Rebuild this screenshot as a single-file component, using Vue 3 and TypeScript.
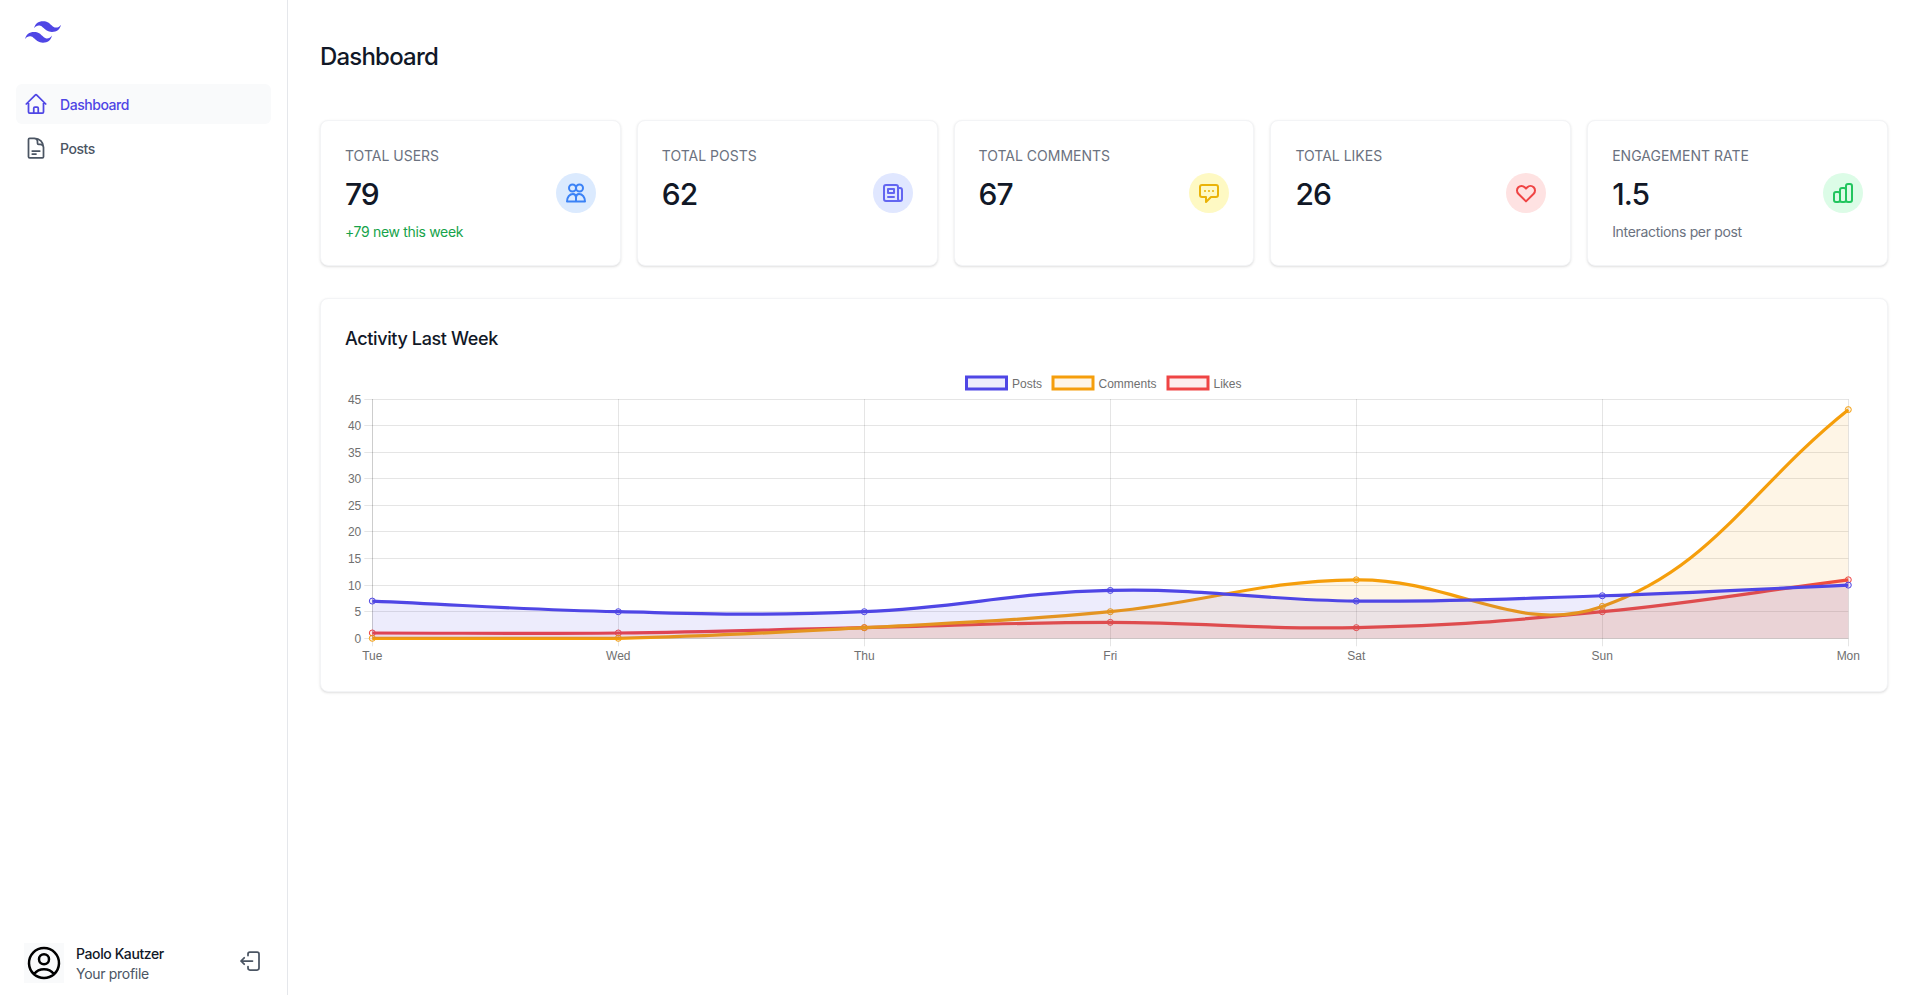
<script setup lang="ts">
type Point = { x: number; y: number }

const stats = [
  { label: 'Total Users', value: '79', sub: '+79 new this week', subClass: 'sub-green', tone: 'blue', icon: 'users' },
  { label: 'Total Posts', value: '62', sub: '', subClass: '', tone: 'indigo', icon: 'news' },
  { label: 'Total Comments', value: '67', sub: '', subClass: '', tone: 'yellow', icon: 'chat' },
  { label: 'Total Likes', value: '26', sub: '', subClass: '', tone: 'red', icon: 'heart' },
  { label: 'Engagement Rate', value: '1.5', sub: 'Interactions per post', subClass: 'sub-gray', tone: 'green', icon: 'bars' },
]

const days = ['Tue', 'Wed', 'Thu', 'Fri', 'Sat', 'Sun', 'Mon']
const yTicks = [0, 5, 10, 15, 20, 25, 30, 35, 40, 45]

// plot area inside the 1518x300 chart
const left = 27.3
const right = 1503.3
const top = 32
const bottom = 271.3

const xAt = (i: number) => left + ((right - left) / 6) * i
const yAt = (v: number) => bottom - ((bottom - top) / 45) * v

const clamp = (v: number, lo: number, hi: number) => Math.min(hi, Math.max(lo, v))

// same control points as a line chart with tension 0.4
function smooth(values: number[]) {
  const pts: Point[] = values.map((v, i) => ({ x: xAt(i), y: yAt(v) }))
  const t = 0.4
  const ctrl = pts.map((p, i) => {
    const a = pts[i - 1] ?? p
    const b = pts[i + 1] ?? p
    const d01 = Math.hypot(p.x - a.x, p.y - a.y)
    const d12 = Math.hypot(b.x - p.x, b.y - p.y)
    const sum = d01 + d12 || 1
    const fa = (t * d01) / sum
    const fb = (t * d12) / sum
    return {
      px: clamp(p.x - fa * (b.x - a.x), left, right),
      py: clamp(p.y - fa * (b.y - a.y), top, bottom),
      nx: clamp(p.x + fb * (b.x - a.x), left, right),
      ny: clamp(p.y + fb * (b.y - a.y), top, bottom),
    }
  })
  let d = `M${pts[0].x} ${pts[0].y}`
  for (let i = 1; i < pts.length; i++) {
    d += ` C${ctrl[i - 1].nx} ${ctrl[i - 1].ny} ${ctrl[i].px} ${ctrl[i].py} ${pts[i].x} ${pts[i].y}`
  }
  return { pts, line: d, area: `${d} L${right} ${bottom} L${left} ${bottom} Z` }
}

// the last series goes first so that Posts ends up on top
const series = [
  { name: 'Likes', color: '#ef4444', fill: 'rgba(239,68,68,.1)', ...smooth([1, 1, 2, 3, 2, 5, 11]) },
  { name: 'Comments', color: '#f59e0b', fill: 'rgba(245,158,11,.1)', ...smooth([0, 0, 2, 5, 11, 6, 43]) },
  { name: 'Posts', color: '#4f46e5', fill: 'rgba(79,70,229,.1)', ...smooth([7, 5, 5, 9, 7, 8, 10]) },
]

const legend = [
  { name: 'Posts', color: '#4f46e5', fill: 'rgba(79,70,229,.1)', x: 621.5 },
  { name: 'Comments', color: '#f59e0b', fill: 'rgba(245,158,11,.1)', x: 708 },
  { name: 'Likes', color: '#ef4444', fill: 'rgba(239,68,68,.1)', x: 823 },
]

const crisp = (v: number) => Math.round(v - 0.5) + 0.5
</script>

<template>
  <div class="shell">
    <aside class="sidebar">
      <svg class="logo" viewBox="0 0 48 29" fill="#4f46e5">
        <path d="M24 0c-6.4 0-10.4 3.2-12 9.6 2.4-3.2 5.2-4.4 8.4-3.6 1.827.456 3.133 1.781 4.578 3.247C27.333 11.624 30.073 14.4 36 14.4c6.4 0 10.4-3.2 12-9.6-2.4 3.2-5.2 4.4-8.4 3.6-1.827-.456-3.133-1.781-4.578-3.247C32.667 2.776 29.927 0 24 0zM12 14.4c-6.4 0-10.4 3.2-12 9.6 2.4-3.2 5.2-4.4 8.4-3.6 1.827.456 3.133 1.781 4.578 3.247 2.355 2.377 5.095 5.153 11.022 5.153 6.4 0 10.4-3.2 12-9.6-2.4 3.2-5.2 4.4-8.4 3.6-1.827-.456-3.133-1.781-4.578-3.247C20.667 17.176 17.927 14.4 12 14.4z" />
      </svg>

      <nav class="nav">
        <a class="nav-item active">
          <svg class="icon" viewBox="0 0 24 24" fill="none" stroke="currentColor" stroke-width="1.75" stroke-linecap="round" stroke-linejoin="round">
            <path d="m2.25 12 8.954-8.955c.44-.439 1.152-.439 1.591 0L21.75 12M4.5 9.75v10.125c0 .621.504 1.125 1.125 1.125H9.75v-4.875c0-.621.504-1.125 1.125-1.125h2.25c.621 0 1.125.504 1.125 1.125V21h4.125c.621 0 1.125-.504 1.125-1.125V9.75M8.25 21h8.25" />
          </svg>
          <span class="nav-text">Dashboard</span>
        </a>
        <a class="nav-item">
          <svg class="icon" viewBox="0 0 24 24" fill="none" stroke="currentColor" stroke-width="1.75" stroke-linecap="round" stroke-linejoin="round">
            <path d="M19.5 14.25v-2.625a3.375 3.375 0 0 0-3.375-3.375h-1.5A1.125 1.125 0 0 1 13.5 7.125v-1.5a3.375 3.375 0 0 0-3.375-3.375H8.25m0 12.75h7.5m-7.5 3H12M10.5 2.25H5.625c-.621 0-1.125.504-1.125 1.125v17.25c0 .621.504 1.125 1.125 1.125h12.75c.621 0 1.125-.504 1.125-1.125V11.25a9 9 0 0 0-9-9Z" />
          </svg>
          <span class="nav-text">Posts</span>
        </a>
      </nav>

      <div class="profile">
        <div class="avatar">
          <svg viewBox="0 0 24 24" fill="none" stroke="#000" stroke-width="1.5" stroke-linecap="round" stroke-linejoin="round">
            <path d="M17.982 18.725A7.488 7.488 0 0 0 12 15.75a7.488 7.488 0 0 0-5.982 2.975m11.963 0a9 9 0 1 0-11.963 0m11.963 0A8.966 8.966 0 0 1 12 21a8.966 8.966 0 0 1-5.982-2.275M15 9.75a3 3 0 1 1-6 0 3 3 0 0 1 6 0Z" />
          </svg>
        </div>
        <div class="who">
          <div class="who-name">Paolo Kautzer</div>
          <div class="who-link">Your profile</div>
        </div>
        <svg class="icon logout" viewBox="0 0 24 24" fill="none" stroke="currentColor" stroke-width="1.75" stroke-linecap="round" stroke-linejoin="round">
          <path d="M10 6.5V4.900C10 3.850 10.850 3 11.900 3h7.200C20.150 3 21 3.850 21 4.900v14.200c0 1.050-.850 1.900-1.900 1.900h-7.200C10.850 21 10 20.150 10 19.100v-1.600M14.500 12H3m0 0 3.200-3.200M3 12l3.200 3.200" />
        </svg>
      </div>
    </aside>

    <main class="main">
      <h1 class="title">Dashboard</h1>

      <section class="stats">
        <article v-for="s in stats" :key="s.label" class="card stat">
          <div class="stat-label">{{ s.label }}</div>
          <div class="stat-row">
            <div class="stat-value">{{ s.value }}</div>
            <div class="badge" :class="s.tone">
              <svg class="icon" viewBox="0 0 24 24" fill="none" stroke="currentColor" stroke-width="2" stroke-linecap="round" stroke-linejoin="round">
                <template v-if="s.icon === 'users'">
                  <circle cx="8.500" cy="7" r="3.500" />
                  <circle cx="15.500" cy="7" r="3.500" />
                  <path d="M3 20.500c0-4.400 2.600-7.500 6-7.500 2 0 3 1.500 3 3.500v4H3ZM12 16.500c0-2 1-3.500 3-3.500 3.400 0 6 3.100 6 7.500h-9" />
                </template>
                <path v-else-if="s.icon === 'news'" d="M19 20H5a2 2 0 01-2-2V6a2 2 0 012-2h10a2 2 0 012 2v1m2 13a2 2 0 01-2-2V7m2 13a2 2 0 002-2V9a2 2 0 00-2-2h-2m-4-3H9M7 16h6M7 8h6v4H7V8z" />
                <path v-else-if="s.icon === 'chat'" d="M8 10h.01M12 10h.01M16 10h.01M9 16H5a2 2 0 01-2-2V6a2 2 0 012-2h14a2 2 0 012 2v8a2 2 0 01-2 2h-5l-5 5v-5z" />
                <path v-else-if="s.icon === 'heart'" d="M4.318 6.318a4.500 4.500 0 000 6.364L12 20.364l7.682-7.682a4.500 4.500 0 00-6.364-6.364L12 7.636l-1.318-1.318a4.500 4.500 0 00-6.364 0z" />
                <path v-else d="M9 19v-6a2 2 0 00-2-2H5a2 2 0 00-2 2v6a2 2 0 002 2h2a2 2 0 002-2zm0 0V9a2 2 0 012-2h2a2 2 0 012 2v10m-6 0a2 2 0 002 2h2a2 2 0 002-2m0 0V5a2 2 0 012-2h2a2 2 0 012 2v14a2 2 0 01-2 2h-2a2 2 0 01-2-2z" />
              </svg>
            </div>
          </div>
          <div class="stat-sub" :class="s.subClass">{{ s.sub }}</div>
        </article>
      </section>

      <section class="card activity">
        <h2 class="activity-title">Activity Last Week</h2>
        <svg class="chart" viewBox="0 0 1518 300" width="1518" height="300">
          <g v-for="l in legend" :key="l.name">
            <rect :x="l.x" y="10" width="40" height="12" :fill="l.fill" :stroke="l.color" stroke-width="3" />
            <text :x="l.x + 45.500" y="20.600" class="tick" text-anchor="start">{{ l.name }}</text>
          </g>

          <g v-for="v in yTicks" :key="v">
            <line :x1="left - 8" :x2="right" :y1="crisp(yAt(v))" :y2="crisp(yAt(v))" class="grid" />
            <text :x="left - 11" :y="yAt(v) + 4.500" class="tick" text-anchor="end">{{ v }}</text>
          </g>
          <g v-for="(d, i) in days" :key="d">
            <line :x1="crisp(xAt(i))" :x2="crisp(xAt(i))" :y1="top" :y2="bottom + 8" class="grid" />
            <text :x="xAt(i)" :y="bottom + 22" class="tick" text-anchor="middle">{{ d }}</text>
          </g>
          <line :x1="crisp(left)" :x2="crisp(left)" :y1="top" :y2="bottom" class="grid" />
          <line :x1="left" :x2="right" :y1="crisp(bottom)" :y2="crisp(bottom)" class="grid" />

          <g v-for="s in series" :key="s.name">
            <path :d="s.area" :fill="s.fill" />
            <path :d="s.line" fill="none" :stroke="s.color" stroke-width="3.200" />
            <circle v-for="(p, i) in s.pts" :key="i" :cx="p.x" :cy="p.y" r="3" :fill="s.fill" :stroke="s.color" stroke-width="1" />
          </g>
        </svg>
      </section>
    </main>
  </div>
</template>

<style>
html, body {
  margin: 0;
  background: #fff;
}
</style>

<style scoped>
.shell {
  display: flex;
  height: 995px;
  font-family: Inter, "Noto Sans", sans-serif;
  color: #111827;
  overflow: hidden;
}

.sidebar {
  width: 287px;
  flex: none;
  display: flex;
  flex-direction: column;
  border-right: 1px solid #e5e7eb;
  box-sizing: content-box;
}

.logo {
  display: block;
  width: 36px;
  height: 22px;
  margin: 21px 0 0 25px;
}

.nav {
  margin-top: 41px;
  padding: 0 16px;
  display: flex;
  flex-direction: column;
  gap: 4px;
}

.nav-item {
  display: flex;
  align-items: center;
  gap: 12px;
  padding: 8px;
  border-radius: 6px;
  font-size: 14px;
  line-height: 24px;
  font-weight: 500;
  letter-spacing: -.45px;
  color: #4b5563;
}

.nav-item.active {
  color: #4f46e5;
  background: #f9fafb;
}

.nav-text {
  padding-top: 1px;
  margin-bottom: -1px;
}

.icon {
  display: block;
  width: 24px;
  height: 24px;
  flex: none;
}

.profile {
  margin-top: auto;
  display: flex;
  align-items: center;
  padding: 0 24px 12px;
}

.avatar {
  width: 40px;
  height: 40px;
  background: #f9fafb;
  flex: none;
}

.avatar svg {
  display: block;
}

.who {
  margin-left: 12px;
  box-sizing: border-box;
  height: 40px;
  padding-top: 1px;
  font-size: 14px;
  line-height: 20px;
}

.who-name {
  font-weight: 500;
  letter-spacing: -.4px;
  color: #111827;
}

.who-link {
  letter-spacing: -.3px;
  color: #4b5563;
}

.logout {
  margin-left: auto;
  margin-right: 1px;
  margin-top: -5px;
  color: #4b5563;
}

.main {
  flex: 1;
  min-width: 0;
  padding: 41px 32px 0;
}

.title {
  margin: 0 0 47px;
  font-size: 24px;
  line-height: 32px;
  font-weight: 500;
  letter-spacing: -.8px;
  color: #111827;
}

.stats {
  display: grid;
  grid-template-columns: repeat(5, minmax(0, 1fr));
  gap: 16px;
  margin-bottom: 32px;
}

.card {
  background: #fff;
  border: 1px solid #f3f4f6;
  border-radius: 8px;
  box-shadow: 0 1px 3px 0 rgba(0, 0, 0, .1), 0 1px 2px -1px rgba(0, 0, 0, .1);
}

.stat {
  padding: 24px;
}

.stat-label {
  padding-top: 1px;
  margin-bottom: -1px;
  font-size: 14px;
  line-height: 20px;
  font-weight: 400;
  color: #6b7280;
  text-transform: uppercase;
}

.stat-row {
  margin-top: 8px;
  display: flex;
  align-items: center;
  justify-content: space-between;
}

.stat-value {
  padding-top: 2px;
  font-size: 30px;
  line-height: 36px;
  font-weight: 500;
  letter-spacing: -1px;
  color: #111827;
}

.badge {
  width: 40px;
  height: 40px;
  border-radius: 50%;
  display: flex;
  align-items: center;
  justify-content: center;
}

.badge.blue { background: #dbeafe; color: #3b82f6; }
.badge.indigo { background: #e0e7ff; color: #6366f1; }
.badge.yellow { background: #fef9c3; color: #eab308; }
.badge.red { background: #fee2e2; color: #ef4444; }
.badge.green { background: #dcfce7; color: #22c55e; }

.stat-sub {
  padding-top: 1px;
  margin: 8px 0 -1px;
  min-height: 20px;
  font-size: 14px;
  line-height: 20px;
  letter-spacing: -.33px;
}

.sub-green { color: #16a34a; }
.sub-gray { color: #6b7280; }

.activity {
  padding: 24px;
}

.activity-title {
  padding-top: 2px;
  margin: 0 0 14px;
  font-size: 18px;
  line-height: 28px;
  font-weight: 500;
  letter-spacing: -.37px;
  color: #111827;
}

.chart {
  display: block;
}

.grid {
  stroke: rgba(0, 0, 0, .1);
  stroke-width: 1;
}

.tick {
  font-family: "Liberation Sans", Arial, sans-serif;
  font-size: 12px;
  fill: #707070;
}
</style>
